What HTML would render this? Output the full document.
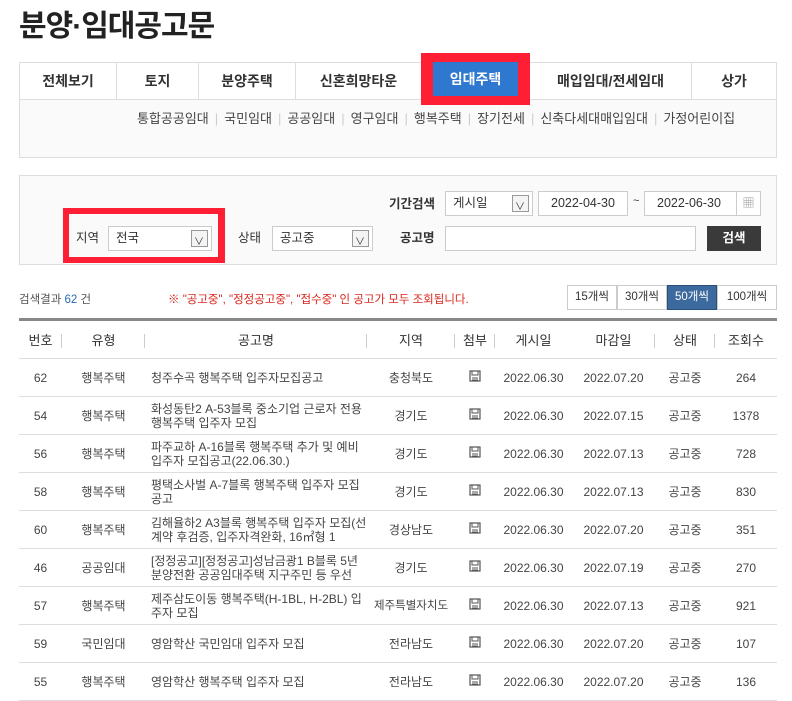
<!DOCTYPE html>
<html><head><meta charset="utf-8"><style>
*{box-sizing:border-box;margin:0;padding:0}
body{width:792px;height:690px;overflow:hidden;background:#fff;font-family:"Liberation Sans","Noto Sans CJK KR",sans-serif;color:#333;position:relative}
.a{position:absolute}
h1{position:absolute;left:19px;top:1px;font-size:30px;font-weight:bold;color:#222;letter-spacing:-1px}
.tabs{left:19px;top:62px;width:758px;height:96px;border:1px solid #ddd;background:#fafafa}
.tabrow{position:absolute;left:0;top:0;width:756px;height:37px;background:#fff;border-bottom:1px solid #ddd;display:flex}
.tabrow div{height:36px;line-height:36px;text-align:center;font-size:14px;font-weight:bold;color:#333;border-right:1px solid #ddd}
.sub{position:absolute;left:117px;top:45px;font-size:13px;color:#444;white-space:nowrap}
.sub i{color:#ccc;font-style:normal;margin:0 6px}
.srch{left:19px;top:175px;width:758px;height:90px;border:1px solid #ddd;background:#fafafa}
.lbl{font-size:12.5px;font-weight:bold;color:#333}
.box{border:1px solid #ccc;background:#fff;font-size:12.5px;color:#333;height:25px;line-height:23px;padding-left:7px}
.sel:after{content:"";position:absolute;right:3px;top:3px;width:15px;height:15px;border:1px solid #999;background:#f4f4f4}
.sel span{position:absolute;right:7px;top:4px;font-size:10px;color:#333;z-index:2}
table{position:absolute;left:19px;top:318px;width:758px;border-collapse:collapse;border-top:3px solid #888}
th{height:39px;font-size:13px;font-weight:normal;color:#333;border-bottom:1px solid #ddd;position:relative}
td{height:38px;font-size:12px;color:#444;text-align:center;border-bottom:1px solid #ddd;line-height:14px}
td.t{text-align:left;padding-left:6px}
th.s:after{content:"";position:absolute;right:0;top:13px;height:14px;border-right:1px solid #ccc}
.pg{top:285px;height:25px;border:1px solid #ccc;font-size:11.5px;text-align:center;line-height:23px;color:#333;background:#fff}
</style></head><body>
<h1>분양·임대공고문</h1>
<div class="a tabs">
<div class="tabrow">
<div style="width:97px">전체보기</div><div style="width:82px">토지</div><div style="width:97px">분양주택</div><div style="width:126px">신혼희망타운</div><div style="width:108px;border-right:1px solid #ddd"></div><div style="width:162px">매입임대/전세임대</div><div style="width:84px;border-right:none">상가</div>
</div>
<div class="sub">통합공공임대<i>|</i>국민임대<i>|</i>공공임대<i>|</i>영구임대<i>|</i>행복주택<i>|</i>장기전세<i>|</i>신축다세대매입임대<i>|</i>가정어린이집</div>
</div>
<div class="a" style="left:421px;top:53px;width:109px;height:52px;background:#ff1f35"></div>
<div class="a" style="left:433px;top:62px;width:85px;height:34px;background:#2f78cf;color:#fff;font-weight:bold;font-size:14px;text-align:center;line-height:34px">임대주택</div>

<div class="a srch"></div>
<div class="a lbl" style="left:389px;top:193px">기간검색</div>
<div class="a box sel" style="left:445px;top:191px;width:88px">게시일<span>∨</span></div>
<div class="a box" style="left:538px;top:191px;width:90px;padding-left:12px">2022-04-30</div>
<div class="a" style="left:633px;top:195px;font-size:11px">~</div>
<div class="a box" style="left:644px;top:191px;width:93px;padding-left:12px">2022-06-30</div>
<div class="a box" style="left:736px;top:191px;width:25px;padding:0;text-align:center;color:#999;font-size:12px">▦</div>
<div class="a" style="left:63px;top:208px;width:162px;height:55px;background:#ff1f35"></div>
<div class="a" style="left:69px;top:214px;width:149px;height:43px;background:#fafafa"></div>
<div class="a lbl" style="left:76px;top:227px;font-weight:normal">지역</div>
<div class="a box sel" style="left:108px;top:226px;width:104px">전국<span>∨</span></div>
<div class="a lbl" style="left:238px;top:227px;font-weight:normal">상태</div>
<div class="a box sel" style="left:272px;top:226px;width:101px">공고중<span>∨</span></div>
<div class="a lbl" style="left:400px;top:227px">공고명</div>
<div class="a box" style="left:445px;top:226px;width:251px"></div>
<div class="a" style="left:707px;top:226px;width:54px;height:25px;background:#3a3a3a;color:#fff;font-weight:bold;font-size:12.5px;text-align:center;line-height:25px">검색</div>

<div class="a" style="left:19px;top:291px;font-size:11.5px;color:#555">검색결과 <span style="color:#2a6bb3">62</span> 건</div>
<div class="a" style="left:168px;top:291px;font-size:11.5px;color:#d9261c">※ "공고중", "정정공고중", "접수중" 인 공고가 모두 조회됩니다.</div>
<div class="a pg" style="left:567px;width:50px">15개씩</div>
<div class="a pg" style="left:617px;width:50px">30개씩</div>
<div class="a pg" style="left:667px;width:50px;background:#3d6a9e;color:#fff;border-color:#2c4f78">50개씩</div>
<div class="a pg" style="left:717px;width:60px">100개씩</div>

<svg width="0" height="0" style="position:absolute"><defs><symbol id="fl" viewBox="0 0 12 12"><rect x="1" y="1" width="10" height="10" fill="none" stroke="#555" stroke-width="1.2"/><rect x="3" y="1" width="6" height="4" fill="none" stroke="#555" stroke-width="1"/><line x1="3" y1="8" x2="9" y2="8" stroke="#555"/><line x1="3" y1="10" x2="9" y2="10" stroke="#555"/></symbol></defs></svg>
<table>
<tr><th class="s" style="width:43px">번호</th><th class="s" style="width:83px">유형</th><th class="s" style="width:222px">공고명</th><th class="s" style="width:88px">지역</th><th class="s" style="width:40px">첨부</th><th style="width:77px">게시일</th><th class="s" style="width:83px">마감일</th><th class="s" style="width:60px">상태</th><th>조회수</th></tr>
<tr><td>62</td><td>행복주택</td><td class="t">청주수곡 행복주택 입주자모집공고</td><td>충청북도</td><td><svg width="12" height="12"><use href="#fl"/></svg></td><td>2022.06.30</td><td>2022.07.20</td><td>공고중</td><td>264</td></tr>
<tr><td>54</td><td>행복주택</td><td class="t">화성동탄2 A-53블록 중소기업 근로자 전용 행복주택 입주자 모집</td><td>경기도</td><td><svg width="12" height="12"><use href="#fl"/></svg></td><td>2022.06.30</td><td>2022.07.15</td><td>공고중</td><td>1378</td></tr>
<tr><td>56</td><td>행복주택</td><td class="t">파주교하 A-16블록 행복주택 추가 및 예비 입주자 모집공고(22.06.30.)</td><td>경기도</td><td><svg width="12" height="12"><use href="#fl"/></svg></td><td>2022.06.30</td><td>2022.07.13</td><td>공고중</td><td>728</td></tr>
<tr><td>58</td><td>행복주택</td><td class="t">평택소사벌 A-7블록 행복주택 입주자 모집 공고</td><td>경기도</td><td><svg width="12" height="12"><use href="#fl"/></svg></td><td>2022.06.30</td><td>2022.07.13</td><td>공고중</td><td>830</td></tr>
<tr><td>60</td><td>행복주택</td><td class="t">김해율하2 A3블록 행복주택 입주자 모집(선계약 후검증, 입주자격완화, 16㎡형 1</td><td>경상남도</td><td><svg width="12" height="12"><use href="#fl"/></svg></td><td>2022.06.30</td><td>2022.07.20</td><td>공고중</td><td>351</td></tr>
<tr><td>46</td><td>공공임대</td><td class="t">[정정공고][정정공고]성남금광1 B블록 5년 분양전환 공공임대주택 지구주민 등 우선</td><td>경기도</td><td><svg width="12" height="12"><use href="#fl"/></svg></td><td>2022.06.30</td><td>2022.07.19</td><td>공고중</td><td>270</td></tr>
<tr><td>57</td><td>행복주택</td><td class="t">제주삼도이동 행복주택(H-1BL, H-2BL) 입주자 모집</td><td style="font-size:11.5px">제주특별자치도</td><td><svg width="12" height="12"><use href="#fl"/></svg></td><td>2022.06.30</td><td>2022.07.13</td><td>공고중</td><td>921</td></tr>
<tr><td>59</td><td>국민임대</td><td class="t">영암학산 국민임대 입주자 모집</td><td>전라남도</td><td><svg width="12" height="12"><use href="#fl"/></svg></td><td>2022.06.30</td><td>2022.07.20</td><td>공고중</td><td>107</td></tr>
<tr><td>55</td><td>행복주택</td><td class="t">영암학산 행복주택 입주자 모집</td><td>전라남도</td><td><svg width="12" height="12"><use href="#fl"/></svg></td><td>2022.06.30</td><td>2022.07.20</td><td>공고중</td><td>136</td></tr>
</table>
</body></html>
